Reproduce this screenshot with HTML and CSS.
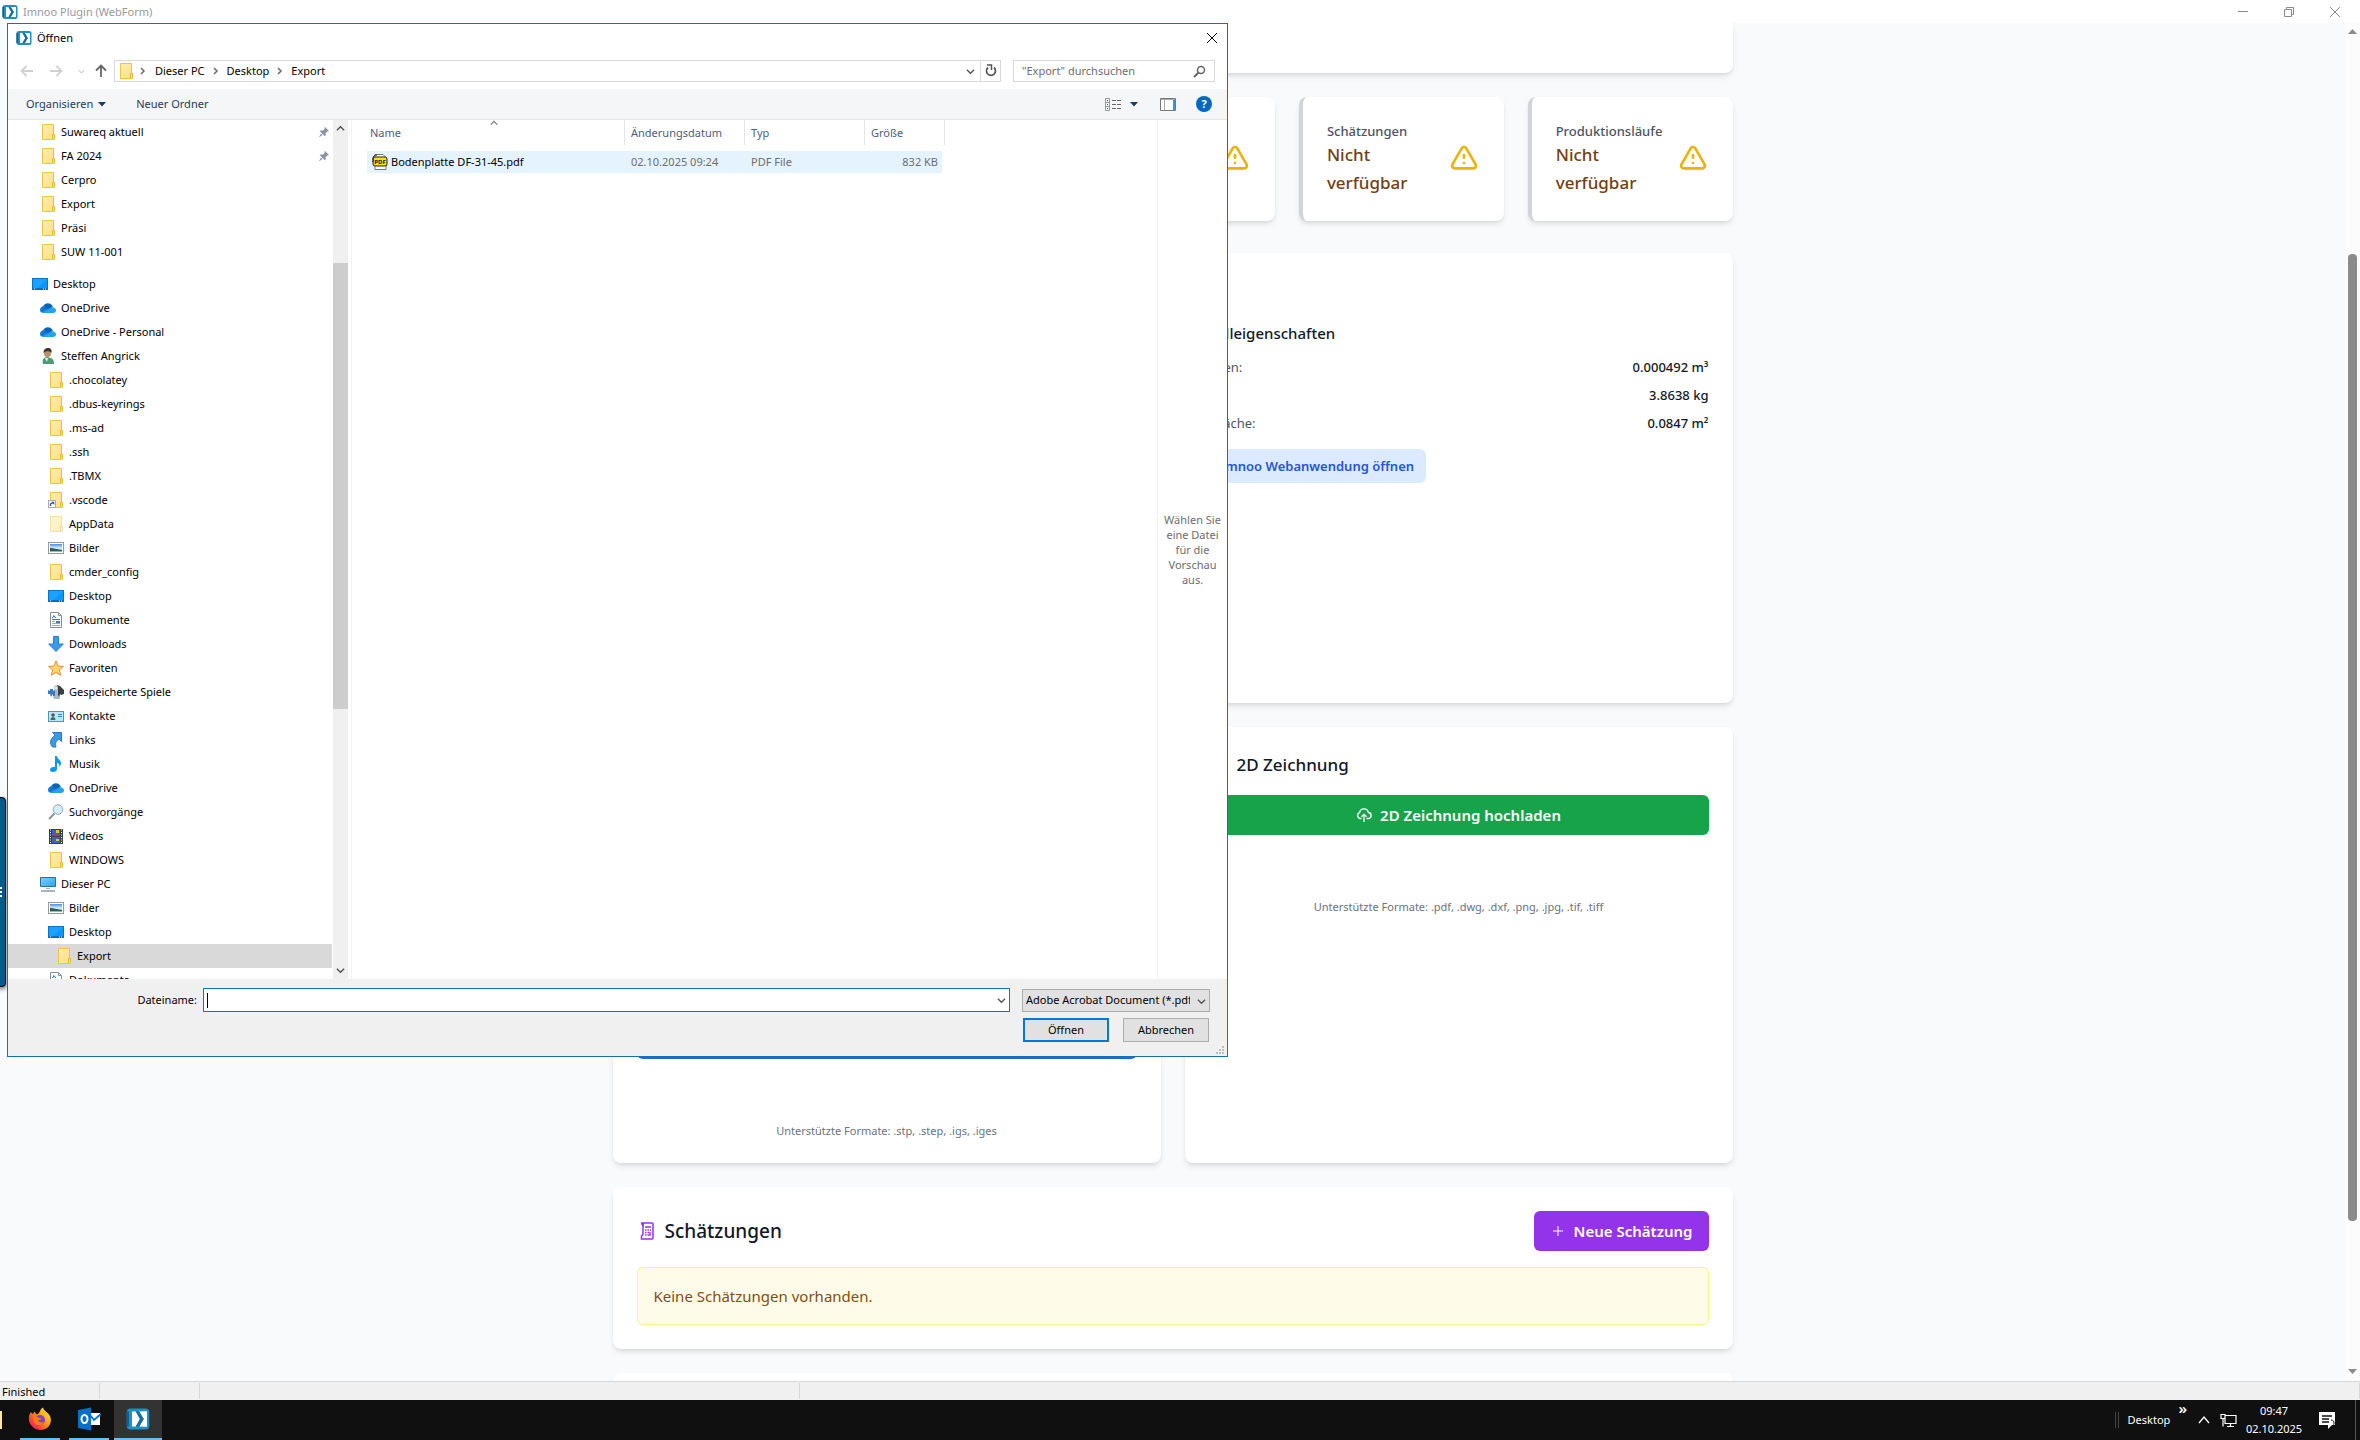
FILE: index.html
```html
<!DOCTYPE html>
<html lang="de">
    <head>
        <meta charset="utf-8">
        <title>Imnoo Plugin (WebForm)</title>
        <link rel="stylesheet" href="styles.css">
    </head>
    <body>
        <svg class="sprite" aria-hidden="true">
            <defs>
                <linearGradient id="g-folder" x1="0" y1="0" x2="1" y2="1"><stop offset="0" stop-color="#ffeeb0"/><stop offset="1" stop-color="#ffdf7e"/></linearGradient>
                <linearGradient id="g-sky" x1="0" y1="0" x2="0" y2="1"><stop offset="0" stop-color="#4b8ee0"/><stop offset=".5" stop-color="#d9ecfb"/><stop offset="1" stop-color="#7fb0d8"/></linearGradient>
                <linearGradient id="g-fox" x1="1" y1="0" x2="0" y2="1"><stop offset="0" stop-color="#fff44f"/><stop offset=".45" stop-color="#ff980e"/><stop offset=".75" stop-color="#ff3647"/><stop offset="1" stop-color="#e31587"/></linearGradient>
                <linearGradient id="g-screen" x1="0" y1="0" x2="1" y2="1"><stop offset="0" stop-color="#7fd0fb"/><stop offset="1" stop-color="#2aa4f4"/></linearGradient>
            </defs>
            <symbol id="i-imnoo" viewBox="0 0 16 16"><rect x=".5" y="1" width="15" height="14" rx="2.5" fill="#1f8fc4"/><path d="M1.200 3v10" stroke="#0f5f88" stroke-width="1.500"/><path d="M4 3h2.500l2.800 5-2.800 5H4z" fill="#fff"/><path d="M8.800 3H14v10H8.800l3-5z" fill="#fff"/><path d="M11 3h3v10h-3l3-5z" fill="#fff"/><path d="M6.500 3h2.300l3 5-3 5H6.500l2.800-5z" fill="#1a6f9c"/></symbol>
            <symbol id="i-folder" viewBox="0 0 16 16"><path d="M2.500.5h11v10h1v5h-12z" fill="url(#g-folder)" stroke="#ecc548"/><path d="M12.500 15v-4.500h2V15" fill="#ffe9a0" stroke="#e3b93a"/></symbol>
            <symbol id="i-shortcut" viewBox="0 0 16 16"><use href="#i-folder"/><rect x=".5" y="8.500" width="7" height="7" fill="#fff" stroke="#a8adb5"/><path d="M2.500 14v-2l2-1" stroke="#2b5797" stroke-width="1.300" fill="none"/><path d="M3 9.800h3.300V13z" fill="#2b5797"/></symbol>
            <symbol id="i-desktop" viewBox="0 0 16 16"><rect x=".5" y="2.500" width="15" height="11" fill="#1ba1ff" stroke="#0f71c0"/><path d="M15 3v10H5z" fill="#0b97fb"/><path d="M1 13h14" stroke="#0a4f8c"/><path d="M2 13h1M11 13h1M13 13h1" stroke="#fff"/></symbol>
            <symbol id="i-cloud" viewBox="0 0 16 16"><path d="M3 6.500C4 3.500 8 2 11 4.200c1.300.8 1.700 2 1.800 2.800l-5 3z" fill="#0a64b8"/><path d="M0 10c0-2.500 2-3.900 4-3.700l8 6.500H3C1.200 12.800 0 11.500 0 10z" fill="#1177d3"/><path d="M2 12.600 11 7.400c2.500-.9 5 .6 5 2.900 0 1.500-1.200 2.700-2.700 2.700H3z" fill="#28a2ea"/></symbol>
            <symbol id="i-user" viewBox="0 0 16 16"><path d="M3 16c-1-4 0-6.500 4-7l4 1c2.500 1 3 3 3 6z" fill="#4d9b74"/><path d="M5 10l2 4 1-4z" fill="#e8f2ee"/><circle cx="7.500" cy="5.500" r="3.500" fill="#b98e6a"/><path d="M3.500 5C3.500 1 6 0 8 0c3 0 4 2 3.500 5-1-2-4-2-6-1.500z" fill="#3a3330"/></symbol>
            <symbol id="i-picture" viewBox="0 0 16 16"><rect x=".5" y="2.500" width="15" height="11" fill="#fff" stroke="#9a9a9a"/><rect x="2" y="4" width="12" height="8" fill="url(#g-sky)"/><path d="M2 8c3 0 6 1 12 2v1H2z" fill="#2f5d4c"/></symbol>
            <symbol id="i-doc" viewBox="0 0 16 16"><path d="M2.500.5h8l3 3v12h-11z" fill="#fff" stroke="#8b8f94"/><path d="M10.500.5v3h3" fill="none" stroke="#8b8f94"/><path d="M4 5.500h1l1-2 1 2h1M4 7.500h8" stroke="#1f87d6" fill="none"/><path d="M4 9.500h3M4 11.500h8M4 13.500h8" stroke="#a0a7af"/><path d="M8 9h4v2H8z" fill="#3c7fb5"/></symbol>
            <symbol id="i-down" viewBox="0 0 16 16"><path d="M5.500.5h5v7.500h4.800L8 15.500.7 8h4.800z" fill="#3b9ae8" stroke="#2c7fd0"/></symbol>
            <symbol id="i-star" viewBox="0 0 16 16"><path d="M8 .8 10.200 6l5.300.4-4.100 3.500 1.300 5.400L8 12.400l-4.700 2.900 1.300-5.400L.5 6.400 5.800 6z" fill="#ffd36b" stroke="#e2933a"/></symbol>
            <symbol id="i-games" viewBox="0 0 16 16"><path d="M9 1l3 1 4 4v4l-3 1-1-1-1 5H9l1-5z" fill="#3b4046"/><path d="M6 3l2-2 2 2v8l2 3-2 1H6l-1-2 2-3z" fill="#a9bac6"/><path d="M0 6l2 1V5h3v2l2-1v6H5v-2l-2 3-1-3-2 0z" fill="#3a7cc0"/><circle cx="8" cy="4" r="1.500" fill="#e3eaef"/></symbol>
            <symbol id="i-contact" viewBox="0 0 16 16"><rect x=".5" y="3.500" width="15" height="10" fill="#bfe3f7" stroke="#4f94bd"/><path d="M2.500 12c0-2 1-3 2.500-3s2.500 1 2.500 3z" fill="#2f7a55"/><circle cx="5" cy="7" r="1.700" fill="#5d4a3c"/><path d="M10 6.500h4M10 8.500h4" stroke="#3c86b6"/></symbol>
            <symbol id="i-link" viewBox="0 0 16 16"><path d="M4.500.5h9v9L11 7c-3 2-4 4-3 8H4.500C1 11 2.500 7 7 3z" fill="#3b9ae8" stroke="#2f78bb"/></symbol>
            <symbol id="i-music" viewBox="0 0 16 16"><path d="M7 0h2c0 3 4 4 4 7 0 2-1 3-1.500 4 0-3-1-4-2.500-4v6c0 2-2 3-4 3s-3-1-3-2.300C2 12 4 10.500 7 11z" fill="#0a97f5"/></symbol>
            <symbol id="i-search" viewBox="0 0 16 16"><path d="M1 15l5.500-5.500" stroke="#8b939b" stroke-width="2"/><circle cx="10" cy="5.500" r="4.800" fill="#d5ecfa" stroke="#93a4b3"/></symbol>
            <symbol id="i-video" viewBox="0 0 16 16"><path d="M1 1h14v15H1z" fill="#3d3f43"/><path d="M2.500 1.500v14M13.500 1.500v14" stroke="#fff" stroke-dasharray="1 1.500"/><path d="M4 2h8v6H4zM4 9h8v6H4z" fill="#2f66c9"/><path d="M8 2h3v3H8zM8 11h3v2H8z" fill="#e8c22b"/><path d="M6 5h3v3H6z" fill="#b4356f"/></symbol>
            <symbol id="i-pc" viewBox="0 0 16 16"><path d="M.5 1.500h15v9H.5z" fill="url(#g-screen)" stroke="#2b6f9e"/><path d="M6 12.500h4" stroke="#9fb0bd"/><path d="M1 15h14" stroke="#8a9aa6" stroke-width="1.500"/></symbol>
            <symbol id="i-pin" viewBox="0 0 12 12"><path d="M7 1l4 4-1 .6-.8-.2L7.500 7.200l.2 2.300-.9.8-5-5 .8-.9 2.300.2L6.700 3 6.400 2zM3 7.600 4.500 9 1 11.200z" fill="#8793a0"/></symbol>
            <symbol id="i-warn" viewBox="0 0 24 24"><path d="M12 9v2m0 4h.01m-6.938 4h13.856c1.540 0 2.502-1.667 1.732-3L13.732 4c-.77-1.333-2.694-1.333-3.464 0L3.340 16c-.77 1.333.192 3 1.732 3z" fill="none" stroke="#eab308" stroke-width="2" stroke-linecap="round" stroke-linejoin="round"/></symbol>
            <symbol id="i-chev-r" viewBox="0 0 10 10"><path d="M3 2l3 3-3 3" fill="none" stroke="#6a6a6a" stroke-width="1.500"/></symbol>
            <symbol id="i-chev-d" viewBox="0 0 10 10"><path d="M1 3l4 4 4-4" fill="none" stroke="currentColor" stroke-width="1.500"/></symbol>
            <symbol id="i-chev-u" viewBox="0 0 10 10"><path d="M1 7l4-4 4 4" fill="none" stroke="currentColor" stroke-width="1.500"/></symbol>
            <symbol id="i-arrow" viewBox="0 0 14 14"><path d="M13 7H1.500M6.500 2l-5 5 5 5" fill="none" stroke="currentColor" stroke-width="1.800"/></symbol>
        </svg>

        <header class="titlebar">
            <svg class="icon"><use href="#i-imnoo"/></svg>
            <span class="titlebar-text">Imnoo Plugin (WebForm)</span>
            <div class="window-controls">
                <button aria-label="Minimieren"><svg width="12" height="12"><path d="M1 5.500h10" stroke="#8a8a8a"/></svg></button>
                <button aria-label="Wiederherstellen"><svg width="12" height="12"><path d="M1.500 3.500h7v7h-7zM3.500 3.500v-2h7v7h-2" fill="none" stroke="#8a8a8a"/></svg></button>
                <button aria-label="Fenster schließen"><svg width="12" height="12"><path d="M1 1l10 10M11 1L1 11" stroke="#8a8a8a"/></svg></button>
            </div>
        </header>

        <div class="viewport">
            <main class="content">
                <div class="container">
                    <section class="card card-top"></section>

                    <div class="stats">
                        <section class="card stat"></section>
                        <section class="card stat"></section>
                        <section class="card stat"><svg class="stat-icon"><use href="#i-warn"/></svg></section>
                        <section class="card stat">
                            <div>
                                <h3>Schätzungen</h3>
                                <p>Nicht verfügbar</p>
                            </div>
                            <svg class="stat-icon"><use href="#i-warn"/></svg>
                        </section>
                        <section class="card stat">
                            <div>
                                <h3>Produktionsläufe</h3>
                                <p>Nicht verfügbar</p>
                            </div>
                            <svg class="stat-icon"><use href="#i-warn"/></svg>
                        </section>
                    </div>

                    <section class="card model">
                        <div class="model-view"></div>
                        <div class="model-props">
                            <h3>Modelleigenschaften</h3>
                            <dl>
                                <div><dt>Volumen:</dt><dd>0.000492 m³</dd></div>
                                <div><dt>Masse:</dt><dd>3.8638 kg</dd></div>
                                <div><dt>Oberfläche:</dt><dd>0.0847 m²</dd></div>
                            </dl>
                            <a class="web-link" href="#">
                                <svg width="16" height="16" viewBox="0 0 16 16"><path d="M6 3H3v10h10v-3M9 2h5v5M14 2L7 9" fill="none" stroke="currentColor" stroke-width="1.500"/></svg>
                                Imnoo Webanwendung öffnen
                            </a>
                        </div>
                    </section>

                    <div class="uploads">
                        <section class="card upload">
                            <div class="upload-view"></div>
                            <button class="btn btn-blue" aria-label="Modell hochladen"></button>
                            <p class="formats">Unterstützte Formate: .stp, .step, .igs, .iges</p>
                        </section>
                        <section class="card upload">
                            <h2><svg width="20" height="20" viewBox="0 0 20 20"><path d="M4 2h8l4 4v12H4z" fill="none" stroke="#16a34a" stroke-width="1.500"/></svg>2D Zeichnung</h2>
                            <button class="btn btn-green">
                                <svg width="16" height="16" viewBox="0 0 16 16"><path d="M5.500 11.500H4.300A3 3 0 0 1 3.600 5.700 4.400 4.400 0 0 1 12.300 5.500a3 3 0 0 1-.4 6h-1.400M8 15V7.500M5.500 9.800 8 7.300l2.500 2.500" fill="none" stroke="#fff" stroke-width="1.300"/></svg>
                                2D Zeichnung hochladen
                            </button>
                            <p class="formats">Unterstützte Formate: .pdf, .dwg, .dxf, .png, .jpg, .tif, .tiff</p>
                        </section>
                    </div>

                    <section class="card estimates">
                        <div class="estimates-head">
                            <h2>
                                <svg width="20" height="20" viewBox="0 0 20 20"><path d="M5 2h10a1 1 0 0 1 1 1v14a1 1 0 0 1-1 1H4.500V15L6 13V5z" fill="none" stroke="#9333ea" stroke-width="1.500"/><path d="M4 2h3v3H5z" fill="#9333ea"/><path d="M8 6h6M8 9h1.500M10.500 9H12M13 9h1M8 11.500h1.500M10.500 11.500H12M13 11v4M8 14h1.500M10.500 14H12" stroke="#9333ea" stroke-width="1.400"/></svg>
                                Schätzungen
                            </h2>
                            <button class="btn btn-purple">
                                <svg width="16" height="16"><path d="M8 3v10M3 8h10" stroke="#fff" stroke-width="1"/></svg>
                                Neue Schätzung
                            </button>
                        </div>
                        <p class="notice">Keine Schätzungen vorhanden.</p>
                    </section>

                    <section class="card card-next"></section>
                </div>
            </main>
            <div class="page-scroll">
                <svg width="9" height="5"><path d="M0 5L4.500 0 9 5z" fill="#8b8b8b"/></svg>
                <div class="page-track"><div class="page-thumb"></div></div>
                <svg width="9" height="5"><path d="M0 0l4.500 5L9 0z" fill="#8b8b8b"/></svg>
            </div>
        </div>

        <!-- side tab peeking out from under the dialog -->
        <div class="side-tab"><svg width="2" height="10"><path d="M0 1h2M0 5h2M0 9h2" stroke="#fff" stroke-width="2"/></svg></div>

        <div class="dialog" role="dialog" aria-labelledby="dialog-title">
            <div class="dialog-title">
                <svg class="icon"><use href="#i-imnoo"/></svg>
                <span id="dialog-title">Öffnen</span>
                <button class="dialog-close" aria-label="Schließen"><svg width="12" height="12"><path d="M1 1l10 10M11 1L1 11" stroke="#000"/></svg></button>
            </div>

            <div class="dialog-nav">
                <div class="nav-arrows">
                    <button class="dim" aria-label="Zurück"><svg width="14" height="14"><use href="#i-arrow"/></svg></button>
                    <button class="dim" aria-label="Vorwärts"><svg class="flip" width="14" height="14"><use href="#i-arrow"/></svg></button>
                    <button class="dim recent" aria-label="Zuletzt verwendet"><svg width="7" height="7"><use href="#i-chev-d"/></svg></button>
                    <button aria-label="Nach oben"><svg class="up" width="14" height="14"><use href="#i-arrow"/></svg></button>
                </div>
                <nav class="address">
                    <svg class="icon"><use href="#i-folder"/></svg>
                    <svg class="sep"><use href="#i-chev-r"/></svg>
                    <a href="#">Dieser PC</a>
                    <svg class="sep"><use href="#i-chev-r"/></svg>
                    <a href="#">Desktop</a>
                    <svg class="sep"><use href="#i-chev-r"/></svg>
                    <a href="#">Export</a>
                    <button class="address-drop" aria-label="Verlauf"><svg width="9" height="9"><use href="#i-chev-d"/></svg></button>
                    <button class="address-reload" aria-label="Aktualisieren"><svg width="12" height="14" viewBox="0 0 12 14"><path d="M3 3.500a4.500 4.500 0 1 0 6 0" fill="none" stroke="#555" stroke-width="1.700"/><path d="M2 1h4.500v5" fill="none" stroke="#555" stroke-width="1.500"/></svg></button>
                </nav>
                <div class="search">
                    <input type="search" aria-label="Suchen" placeholder="&quot;Export&quot; durchsuchen">
                    <svg width="13" height="13" viewBox="0 0 13 13"><circle cx="8" cy="5" r="3.500" fill="none" stroke="#666" stroke-width="1.500"/><path d="M5.500 7.500L1 12" stroke="#666" stroke-width="2"/></svg>
                </div>
            </div>

            <div class="toolbar">
                <button class="organize">Organisieren <svg width="8" height="5"><path d="M0 0h8L4 4.500z" fill="#1e395b"/></svg></button>
                <button>Neuer Ordner</button>
                <div class="toolbar-right">
                    <button aria-label="Ansicht"><svg width="16" height="13"><path d="M.5.500h4v12h-4zM.5 4.500h4M.5 8.500h4" fill="none" stroke="#999"/><path d="M7 2.500h9M7 6.500h9M7 10.500h9" stroke="#666" stroke-dasharray="4 1"/><path d="M2 2.500h1M2 6.500h1M2 10.500h1" stroke="#a33"/></svg></button>
                    <button class="view-drop" aria-label="Ansicht wählen"><svg width="8" height="5"><path d="M0 0h8L4 4.500z" fill="#1e395b"/></svg></button>
                    <button class="pane-toggle" aria-label="Vorschaufenster"><svg width="16" height="13"><path d="M.5.500h15v12H.5z" fill="#fff" stroke="#777"/><path d="M1 1.500h14M4.500 2v10" stroke="#aaa"/><path d="M13 2h2v10h-2z" fill="#3b94dc"/></svg></button>
                    <button class="help" aria-label="Hilfe">?</button>
                </div>
            </div>

            <div class="panes">
                <div class="tree-wrap">
                    <ul class="tree">
                        <li class="l1"><svg class="icon"><use href="#i-folder"/></svg>Suwareq aktuell<svg class="pin"><use href="#i-pin"/></svg></li>
                        <li class="l1"><svg class="icon"><use href="#i-folder"/></svg>FA 2024<svg class="pin"><use href="#i-pin"/></svg></li>
                        <li class="l1"><svg class="icon"><use href="#i-folder"/></svg>Cerpro</li>
                        <li class="l1"><svg class="icon"><use href="#i-folder"/></svg>Export</li>
                        <li class="l1"><svg class="icon"><use href="#i-folder"/></svg>Präsi</li>
                        <li class="l1"><svg class="icon"><use href="#i-folder"/></svg>SUW 11-001</li>
                        <li class="l0 group"><svg class="icon"><use href="#i-desktop"/></svg>Desktop</li>
                        <li class="l1"><svg class="icon"><use href="#i-cloud"/></svg>OneDrive</li>
                        <li class="l1"><svg class="icon"><use href="#i-cloud"/></svg>OneDrive - Personal</li>
                        <li class="l1"><svg class="icon"><use href="#i-user"/></svg>Steffen Angrick</li>
                        <li class="l2"><svg class="icon"><use href="#i-folder"/></svg>.chocolatey</li>
                        <li class="l2"><svg class="icon"><use href="#i-folder"/></svg>.dbus-keyrings</li>
                        <li class="l2"><svg class="icon"><use href="#i-folder"/></svg>.ms-ad</li>
                        <li class="l2"><svg class="icon"><use href="#i-folder"/></svg>.ssh</li>
                        <li class="l2"><svg class="icon"><use href="#i-folder"/></svg>.TBMX</li>
                        <li class="l2"><svg class="icon"><use href="#i-shortcut"/></svg>.vscode</li>
                        <li class="l2"><svg class="icon faded"><use href="#i-folder"/></svg>AppData</li>
                        <li class="l2"><svg class="icon"><use href="#i-picture"/></svg>Bilder</li>
                        <li class="l2"><svg class="icon"><use href="#i-folder"/></svg>cmder_config</li>
                        <li class="l2"><svg class="icon"><use href="#i-desktop"/></svg>Desktop</li>
                        <li class="l2"><svg class="icon"><use href="#i-doc"/></svg>Dokumente</li>
                        <li class="l2"><svg class="icon"><use href="#i-down"/></svg>Downloads</li>
                        <li class="l2"><svg class="icon"><use href="#i-star"/></svg>Favoriten</li>
                        <li class="l2"><svg class="icon"><use href="#i-games"/></svg>Gespeicherte Spiele</li>
                        <li class="l2"><svg class="icon"><use href="#i-contact"/></svg>Kontakte</li>
                        <li class="l2"><svg class="icon"><use href="#i-link"/></svg>Links</li>
                        <li class="l2"><svg class="icon"><use href="#i-music"/></svg>Musik</li>
                        <li class="l2"><svg class="icon"><use href="#i-cloud"/></svg>OneDrive</li>
                        <li class="l2"><svg class="icon"><use href="#i-search"/></svg>Suchvorgänge</li>
                        <li class="l2"><svg class="icon"><use href="#i-video"/></svg>Videos</li>
                        <li class="l2"><svg class="icon"><use href="#i-folder"/></svg>WINDOWS</li>
                        <li class="l1"><svg class="icon"><use href="#i-pc"/></svg>Dieser PC</li>
                        <li class="l2"><svg class="icon"><use href="#i-picture"/></svg>Bilder</li>
                        <li class="l2"><svg class="icon"><use href="#i-desktop"/></svg>Desktop</li>
                        <li class="l3 selected"><svg class="icon"><use href="#i-folder"/></svg>Export</li>
                        <li class="l2"><svg class="icon"><use href="#i-doc"/></svg>Dokumente</li>
                    </ul>
                    <div class="tree-scroll">
                        <svg width="9" height="9"><use href="#i-chev-u"/></svg>
                        <div class="tree-track"><div class="tree-thumb"></div></div>
                        <svg width="9" height="9"><use href="#i-chev-d"/></svg>
                    </div>
                </div>

                <div class="files">
                    <table>
                        <thead>
                            <tr>
                                <th class="col-name">Name<svg class="sort" width="8" height="8"><use href="#i-chev-u"/></svg></th>
                                <th class="col-date">Änderungsdatum</th>
                                <th class="col-type">Typ</th>
                                <th class="col-size">Größe</th>
                            </tr>
                        </thead>
                        <tbody>
                            <tr>
                                <td class="file-name">
                                    <div>
                                        <svg width="16" height="16" viewBox="0 0 16 16"><path d="M3 .5h8l3 3v12H3z" fill="#fff" stroke="#777"/><rect x="1" y="3" width="14" height="9" rx="2" fill="#f5e40a" stroke="#222"/><path d="M1 8V4c0-2 2-3 4-3" fill="none" stroke="#222"/><text x="8" y="10" font-size="6" font-weight="700" text-anchor="middle" fill="#111">PDF</text></svg>
                                        Bodenplatte DF-31-45.pdf
                                    </div>
                                </td>
                                <td>02.10.2025 09:24</td>
                                <td>PDF File</td>
                                <td class="file-size">832 KB</td>
                            </tr>
                        </tbody>
                    </table>
                </div>

                <div class="preview"><p>Wählen Sie eine Datei für die Vorschau aus.</p></div>
            </div>

            <div class="dialog-foot">
                <div class="foot-row">
                    <label for="filename">Dateiname:</label>
                    <div class="combo">
                        <input id="filename" type="text">
                        <span class="caret"></span>
                        <svg width="9" height="9"><use href="#i-chev-d"/></svg>
                    </div>
                    <div class="filter">
                        <select aria-label="Dateityp"><option>Adobe Acrobat Document (*.pdf)</option></select>
                        <svg width="9" height="9"><use href="#i-chev-d"/></svg>
                    </div>
                </div>
                <div class="foot-buttons">
                    <button class="default">Öffnen</button>
                    <button>Abbrechen</button>
                </div>
                <svg class="grip" width="8" height="8"><path d="M6 0h2v2H6zM3 3h2v2H3zM6 3h2v2H6zM0 6h2v2H0zM3 6h2v2H3zM6 6h2v2H6z" fill="#bfbfbf"/></svg>
            </div>
        </div>

        <div class="statusbar">
            <span class="status-a">Finished</span>
            <span class="status-b"></span>
            <span class="status-c"></span>
            <span class="status-d"></span>
        </div>

        <footer class="taskbar">
            <div class="task-cut"></div>
            <button class="task task-firefox" aria-label="Firefox">
                <svg width="24" height="24" viewBox="0 0 24 24"><path d="M3 5c.5 1 1 1.500 2 2 .5-1 1-2 2-2.500C7 6 8 7 9 7.500c2-1 2.500-2.500 3.500-4.500C13 2 14 1 15 .5c.5 3 4 4.500 6 7 2.500 3 2.500 8 0 11.500-3 4-8.500 5-13 3S.5 15.500.8 11C1 8.500 1.500 6.500 3 5z" fill="url(#g-fox)"/><circle cx="12" cy="13" r="5" fill="#7b41d6"/><path d="M5 10c3-1 5 0 6 1l3 .5c-1 1.500-2.500 1.500-3.500 1.700 0 2 3 3 5.500 1.500-1 3-4 4-7 3-3-1-4-4-4-7.700z" fill="#ff7a1a"/></svg>
            </button>
            <button class="task" aria-label="Outlook">
                <svg width="24" height="24" viewBox="0 0 24 24"><path d="M12 6h11v12H12z" fill="#fff"/><path d="M13 8l4 5 7-6" fill="none" stroke="#0b6fc7" stroke-width="1.800"/><path d="M1 3l13-2.500v23L1 21z" fill="#0b6fc7"/><ellipse cx="7.500" cy="12" rx="3" ry="4" fill="none" stroke="#fff" stroke-width="2"/></svg>
            </button>
            <button class="task task-active" aria-label="Imnoo Plugin"><svg width="24" height="24"><use href="#i-imnoo"/></svg></button>

            <div class="tray">
                <span class="tray-grip"></span>
                <span class="tray-label">Desktop</span>
                <span class="tray-more">»</span>
                <svg class="tray-up" width="12" height="12" viewBox="0 0 12 12"><path d="M1 9l5-6 5 6" fill="none" stroke="#fff" stroke-width="1.300"/></svg>
                <svg width="17" height="15" viewBox="0 0 17 15"><path d="M5 2.500h11v8H5zM1 1.500h4v4H1zM3 5.500v8M10.500 10.500v3M7 13.500h7" fill="none" stroke="#fff" stroke-width="1.200"/></svg>
                <time>09:47<br>02.10.2025</time>
                <svg class="tray-note" width="16" height="17" viewBox="0 0 16 17"><path d="M0 0h16v13h-3l-4 4v-4H0z" fill="#fff"/><path d="M3 4h10M3 7h7M3 10h7" stroke="#101010" stroke-width="1.300"/><path d="M12 8c2 0 3 1 3 3s-1 4-3 4" fill="none" stroke="#101010"/></svg>
                <span class="tray-end"></span>
            </div>
        </footer>
    </body>
</html>
```

FILE: styles.css
```css
* { box-sizing: border-box; }
body {
    margin: 0; padding: 0;
    height: 100vh;
    display: flex;
    flex-direction: column;
    overflow: hidden;
    position: relative;
    background: #f9fafb;
    color: #000;
    font-family: "Noto Sans", "Open Sans", sans-serif;
    font-size: 11px;
    line-height: 16px;
}

h2, h3, p, dl, dd, ul { margin: 0; padding: 0; }
ul { list-style: none; }
svg { display: block; flex: none; }
button {
    font: inherit;
    color: inherit;
    background: none;
    border: 0;
    padding: 0;
}
a { color: inherit; text-decoration: none; }

.sprite { position: absolute; width: 0; height: 0; }
.icon { width: 16px; height: 16px; }

/* main window */
.titlebar {
    height: 23px;
    flex: none;
    display: flex;
    align-items: center;
    gap: 5px;
    padding-left: 2px;
    background: #fff;
    color: #999;
}
.window-controls {
    margin-left: auto;
    margin-right: 19px;
    display: flex;
    gap: 34px;
}

.viewport {
    flex: 1;
    min-height: 0;
    display: flex;
    overflow: hidden;
}
.content { flex: 1; overflow: hidden; }
.container {
    max-width: 1120px;
    margin: 0 auto;
}
.page-scroll {
    width: 15px;
    display: flex;
    flex-direction: column;
    align-items: center;
    padding: 6px 0 7px;
    background: #fcfcfc;
}
.page-track { flex: 1; padding-top: 220px; }
.page-thumb {
    width: 9px;
    height: 967px;
    border-radius: 4px;
    background: #8b8b8b;
}

.card {
    background: #fff;
    border-radius: 8px;
    box-shadow: 0 4px 6px -1px rgba(0, 0, 0, 0.1), 0 2px 4px -2px rgba(0, 0, 0, 0.1);
    padding: 24px;
    margin-bottom: 24px;
}
.card-top {
    height: 50px;
    border-radius: 0 0 8px 8px;
}
.card-next { height: 120px; }

.stats {
    display: grid;
    grid-template-columns: repeat(5, 1fr);
    gap: 24px;
    margin-bottom: 32px;
}
.stat {
    margin: 0;
    display: flex;
    align-items: center;
    justify-content: space-between;
    border-left: 4px solid #d1d5db;
    padding-right: 24px;
}
.stat div { width: 110px; }
.stat h3 {
    font-size: 13px;
    line-height: 20px;
    font-weight: 500;
    color: #4b5563;
}
.stat p {
    width: 90px;
    font-size: 17px;
    line-height: 28px;
    font-weight: 500;
    color: #713f12;
}
.stat-icon { width: 32px; height: 32px; margin-left: auto; }

.model {
    display: grid;
    grid-template-columns: 1fr 1fr;
    gap: 24px;
    min-height: 450px;
    padding-top: 68px;
}
.model-props h3 {
    font-size: 15px;
    line-height: 24px;
    font-weight: 500;
    color: #111827;
    margin-bottom: 12px;
}
.model-props dl {
    display: grid;
    gap: 8px;
    margin-bottom: 16px;
    font-size: 13px;
    line-height: 20px;
}
.model-props dl div { display: flex; justify-content: space-between; }
.model-props dt { color: #4b5563; }
.model-props dd { font-weight: 500; color: #111827; }
.web-link {
    display: inline-flex;
    align-items: center;
    gap: 8px;
    height: 34px;
    padding: 0 12px;
    border-radius: 6px;
    background: #dbeafe;
    color: #2754d8;
    font-size: 13px;
    font-weight: 600;
}

.uploads {
    display: grid;
    grid-template-columns: 1fr 1fr;
    gap: 24px;
    margin-bottom: 24px;
}
.upload { margin: 0; }
.upload-view { height: 268px; }
.upload h2 {
    display: flex;
    align-items: center;
    gap: 8px;
    font-size: 17px;
    line-height: 28px;
    font-weight: 500;
    color: #111827;
    margin-bottom: 16px;
}
.btn {
    display: flex;
    align-items: center;
    justify-content: center;
    gap: 8px;
    height: 40px;
    padding: 0 16px;
    border-radius: 6px;
    color: #fff;
    font-size: 15px;
    font-weight: 600;
}
.btn-blue, .btn-green { width: 100%; }
.btn-blue { background: #2563eb; }
.btn-green { background: #16a34a; }
.btn-purple { background: #9333ea; }
.formats {
    margin-top: 64px;
    text-align: center;
    color: #6b7280;
}

.estimates-head {
    display: flex;
    align-items: center;
    justify-content: space-between;
    margin-bottom: 16px;
}
.estimates h2 {
    display: flex;
    align-items: center;
    gap: 8px;
    font-size: 19px;
    line-height: 28px;
    font-weight: 500;
    color: #111827;
}
.notice {
    padding: 16px;
    border: 1px solid #fef08a;
    border-radius: 6px;
    background: #fefce8;
    color: #854d0e;
    font-size: 15px;
    line-height: 24px;
}

.side-tab {
    position: absolute;
    top: 797px; left: -6px;
    width: 12px; height: 190px;
    display: flex;
    align-items: center;
    padding-left: 5px;
    border: 1px solid #000;
    border-radius: 4px;
    background: #005a8e;
    box-shadow: 1px 2px 4px rgba(0, 0, 0, 0.5);
}

/* open file dialog */
.dialog {
    position: absolute;
    top: 23px; left: 7px;
    width: 1221px; height: 1034px;
    display: flex;
    flex-direction: column;
    border: 1px solid #1a6fb0;
    background: #fff;
}
.dialog-title {
    height: 28px;
    display: flex;
    align-items: center;
    gap: 5px;
    padding: 0 9px 0 8px;
}
.dialog-close { margin-left: auto; }

.dialog-nav {
    height: 37px;
    display: flex;
    align-items: center;
    padding: 1px 12px 0 12px;
    color: #000;
}
.nav-arrows {
    width: 94px;
    display: flex;
    align-items: center;
    gap: 15px;
    color: #666;
}
.nav-arrows .dim { color: #d0d0d0; }
.nav-arrows .recent { margin-right: -6px; }
.flip { transform: rotate(180deg); }
.up { transform: rotate(90deg); }
.address {
    flex: 1;
    height: 22px;
    display: flex;
    align-items: center;
    padding-left: 3px;
    border: 1px solid #d9d9d9;
}
.sep { width: 10px; height: 10px; margin: 0 7px 0 4px; }
.address a + .sep { margin: 0 6px; }
.address-drop { margin-left: auto; margin-right: 5px; color: #555; }
.address-reload {
    height: 20px;
    width: 20px;
    display: flex;
    align-items: center;
    justify-content: center;
    border-left: 1px solid #d9d9d9;
}
.search {
    width: 202px;
    height: 22px;
    margin-left: 12px;
    display: flex;
    align-items: center;
    padding: 0 8px;
    border: 1px solid #d9d9d9;
}
.search input {
    flex: 1;
    min-width: 0;
    border: 0;
    padding: 0;
    font: inherit;
    background: none;
}
.search input::placeholder { color: #6d6d6d; opacity: 1; }

.toolbar {
    height: 31px;
    display: flex;
    align-items: center;
    padding: 0 15px 0 18px;
    background: #f5f6f7;
    border-bottom: 1px solid #e5e5e5;
    color: #1e395b;
}
.organize {
    display: flex;
    align-items: center;
    gap: 5px;
    margin-right: 30px;
}
.toolbar-right {
    margin-left: auto;
    display: flex;
    align-items: center;
}
.view-drop { margin: 0 22px 0 9px; }
.help {
    width: 16px; height: 16px;
    margin-left: 20px;
    border-radius: 50%;
    background: #0067c5;
    color: #fff;
    font-weight: 700;
    line-height: 16px;
}

.panes {
    flex: 1;
    min-height: 0;
    display: flex;
    overflow: hidden;
}
.tree-wrap {
    width: 344px;
    display: flex;
    border-right: 1px solid #f2f2f2;
}
.tree { flex: 1; padding-right: 1px; }
.tree li {
    height: 24px;
    display: flex;
    align-items: center;
    gap: 5px;
}
.tree .group { margin-top: 8px; }
.l0 { padding-left: 24px; }
.l1 { padding-left: 32px; }
.l2 { padding-left: 40px; }
.l3 { padding-left: 48px; }
.tree .selected { background: #d9d9d9; }
.faded { opacity: 0.5; }
.pin { width: 12px; height: 12px; margin-left: auto; margin-right: 2px; }
.tree-scroll {
    width: 15px;
    margin-right: 3px;
    display: flex;
    flex-direction: column;
    align-items: center;
    padding: 4px 0;
    background: #f0f0f0;
    color: #505050;
}
.tree-track { flex: 1; width: 15px; padding-top: 130px; }
.tree-thumb { height: 446px; background: #cdcdcd; }

.files { flex: 1; padding-left: 15px; }
.files table {
    table-layout: fixed;
    width: 577px;
    border-collapse: separate;
    border-spacing: 0;
}
.files th {
    height: 25px;
    padding: 0 0 0 6px;
    text-align: left;
    font-weight: 400;
    color: #4c607a;
    border-right: 1px solid #e5e5e5;
}
.files .col-name { width: 258px; padding-left: 3px; position: relative; }
.col-date, .col-type { width: 120px; }
.col-size { width: 80px; }
.sort {
    position: absolute;
    top: -1px; left: 48%;
    color: #777;
}
.files tbody::before { content: ""; display: block; height: 6px; }
.files td {
    height: 22px;
    padding: 0 0 0 6px;
    background: #e5f3ff;
    color: #6d6d6d;
}
.files .file-name { padding-left: 5px; color: #000; }
.file-name div { display: flex; align-items: center; gap: 3px; }
.files .file-size {
    text-align: right;
    padding-right: 4px;
    border-right: 3px solid #fff;
}

.preview {
    width: 70px;
    display: flex;
    align-items: center;
    justify-content: center;
    border-left: 1px solid #f2f2f2;
    color: #6d6d6d;
    text-align: center;
    line-height: 15px;
}
.preview p { width: 62px; }

.dialog-foot {
    height: 77px;
    padding: 9px 17px 0 0;
    background: #f0f0f0;
    position: relative;
}
.foot-row { display: flex; align-items: center; }
.foot-row label {
    width: 195px;
    padding-right: 6px;
    text-align: right;
}
.combo {
    flex: 1;
    position: relative;
}
.combo input {
    display: block;
    width: 100%;
    height: 24px;
    padding: 0 24px 0 4px;
    border: 1px solid #0078d7;
    background: #fff;
    font: inherit;
}
.combo svg, .filter svg {
    position: absolute;
    right: 4px; top: 8px;
    color: #555;
    pointer-events: none;
}
.caret {
    position: absolute;
    left: 4px; top: 5px;
    width: 1px; height: 15px;
    background: #000;
}
.filter {
    width: 188px;
    margin-left: 12px;
    position: relative;
}
.filter select {
    appearance: none;
    display: block;
    width: 100%;
    height: 23px;
    padding: 0 19px 0 3px;
    border: 1px solid #adadad;
    border-radius: 0;
    background: #e1e1e1;
    font: inherit;
    color: #000;
}
.foot-buttons {
    display: flex;
    justify-content: flex-end;
    gap: 14px;
    margin-top: 6px;
    padding-right: 1px;
}
.foot-buttons button {
    width: 86px; height: 24px;
    border: 1px solid #adadad;
    background: #e1e1e1;
}
.foot-buttons .default { border: 2px solid #0078d7; }
.grip { position: absolute; right: 3px; bottom: 2px; }

/* bottom bars */
.statusbar {
    flex: none;
    height: 19px;
    display: flex;
    border-top: 1px solid #d7d7d7;
    background: #f0f0f0;
    padding: 1px 0;
}
.statusbar span { border-right: 1px solid #d7d7d7; }
.status-a { width: 100px; padding-left: 2px; line-height: 17px; }
.status-b { width: 100px; }
.status-c { width: 600px; }
.status-d { flex: 1; }

.taskbar {
    flex: none;
    height: 40px;
    display: flex;
    align-items: center;
    background: #101010;
    color: #fff;
}
.task-cut { width: 2px; height: 18px; background: #ffe9a0; margin-right: 18px; }
.task {
    width: 40px; height: 40px;
    display: flex;
    align-items: center;
    justify-content: center;
    margin-right: 9px;
    border-bottom: 2px solid #76b9ed;
}
.task + .task { margin-right: 5px; }
.task-active { width: 48px; background: #333; }
.tray {
    margin-left: auto;
    height: 100%;
    display: flex;
    align-items: center;
}
.tray-grip {
    width: 4px; height: 16px;
    border: 1px solid #444;
    border-width: 0 1px;
    margin-right: 9px;
}
.tray-more { align-self: flex-start; margin: 0 11px 0 8px; font-size: 15px; font-weight: 600; }
.tray-up { margin-right: 10px; }
.tray time {
    width: 74px;
    text-align: center;
    line-height: 18px;
}
.tray-note { margin: 0 20px 0 8px; }
.tray-end { width: 5px; height: 40px; border-left: 1px solid #555; }
```
